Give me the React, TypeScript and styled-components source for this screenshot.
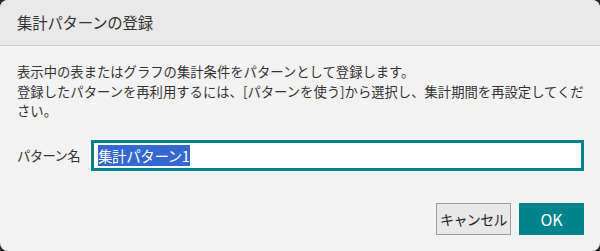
import React from "react";
import styled, { createGlobalStyle } from "styled-components";

const Global = createGlobalStyle`
  html, body {
    margin: 0;
    padding: 0;
    background: #2a2a2a;
  }
  body {
    font-family: "Noto Sans CJK JP", "Noto Sans", sans-serif;
  }
`;

const Dialog = styled.div`
  width: 600px;
  height: 251px;
  box-sizing: border-box;
  border-radius: 8px;
  overflow: hidden;
  background: #f3f3f3;
  display: flex;
  flex-direction: column;
  color: #333;
`;

const Header = styled.div`
  height: 46px;
  box-sizing: border-box;
  background: #e9e9e9;
  border-bottom: 1px solid #cfcfcf;
  display: flex;
  align-items: center;
  padding: 0 17px 1px;
`;

const Title = styled.h1`
  margin: 0;
  font-size: 15.4px;
  font-weight: 400;
  color: #333;
  letter-spacing: -0.2px;
`;

const Body = styled.div`
  flex: 1;
  display: flex;
  flex-direction: column;
  padding: 16px 8px 16px 17px;
`;

const Message = styled.p`
  margin: 0;
  font-size: 13.33px;
  line-height: 19.5px;
  color: #333;
`;

const FieldRow = styled.div`
  display: flex;
  align-items: center;
  margin: 19px 8px 0 0;
`;

const Label = styled.label`
  width: 74px;
  flex-shrink: 0;
  font-size: 13.33px;
  color: #333;
  letter-spacing: -0.6px;
`;

const InputBox = styled.div`
  flex: 1;
  height: 31px;
  box-sizing: border-box;
  border: 3px solid #00848c;
  background: #fff;
  display: flex;
  align-items: center;
  padding-left: 4px;
`;

const Selected = styled.span`
  background: #3468cf;
  color: #fff;
  font-size: 14.5px;
  line-height: 21px;
  letter-spacing: -0.4px;
`;

const Footer = styled.div`
  margin: auto 8px 0 0;
  display: flex;
  justify-content: flex-end;
  gap: 8px;
`;

const Button = styled.button<{ $primary?: boolean }>`
  height: 32px;
  box-sizing: border-box;
  font-family: "Noto Sans CJK JP", "Noto Sans", sans-serif;
  cursor: pointer;
  padding: 0;
  border: 1px solid ${(p) => (p.$primary ? "#00848c" : "#9c9c9c")};
  background: ${(p) => (p.$primary ? "#00848c" : "#e8e8e8")};
  color: ${(p) => (p.$primary ? "#fff" : "#222")};
  width: ${(p) => (p.$primary ? "65px" : "75px")};
  font-size: ${(p) => (p.$primary ? "16px" : "14px")};
  letter-spacing: ${(p) => (p.$primary ? "0" : "-0.6px")};
`;

export default function App() {
  return (
    <>
      <Global />
      <Dialog>
        <Header>
          <Title>集計パターンの登録</Title>
        </Header>
        <Body>
          <Message>
            表示中の表またはグラフの集計条件をパターンとして登録します。
            <br />
            登録したパターンを再利用するには、[パターンを使う]から選択し、集計期間を再設定してください。
          </Message>
          <FieldRow>
            <Label>パターン名</Label>
            <InputBox>
              <Selected>集計パターン1</Selected>
            </InputBox>
          </FieldRow>
          <Footer>
            <Button>キャンセル</Button>
            <Button $primary>OK</Button>
          </Footer>
        </Body>
      </Dialog>
    </>
  );
}
